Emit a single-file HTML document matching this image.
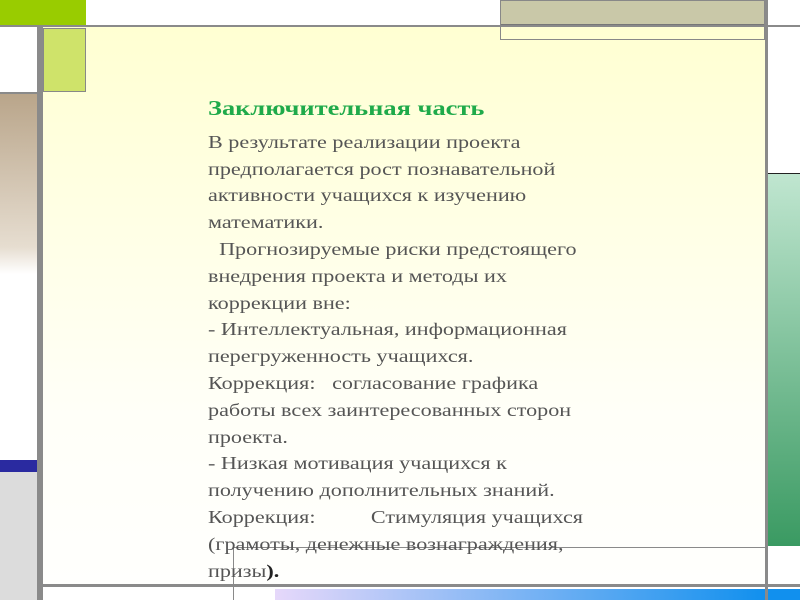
<!DOCTYPE html>
<html><head><meta charset="utf-8"><style>
*{margin:0;padding:0}
body{width:800px;height:600px;position:relative;overflow:hidden;background:#fff;font-family:"Liberation Serif",serif}
div{position:absolute}
.g{background:#8a8a8a}
</style></head><body>
<div style="left:43px;top:27px;width:722px;height:557px;background:linear-gradient(#ffffd2,#fffff8 70%,#fffffd)"></div>
<div style="left:0;top:0;width:86px;height:25px;background:#99cc00"></div>
<div class="g" style="left:0;top:25px;width:800px;height:2px"></div>
<div style="left:43px;top:28px;width:43px;height:64px;background:#cfe36a;border:1px solid #888;box-sizing:border-box"></div>
<div class="g" style="left:0;top:92px;width:37px;height:2px"></div>
<div style="left:0;top:94px;width:37px;height:180px;background:linear-gradient(#b9a58a,#e6ddd0 85%,#fff)"></div>
<div style="left:0;top:460px;width:37px;height:12px;background:#2a2aa0"></div>
<div style="left:0;top:472px;width:37px;height:128px;background:#dcdcdc"></div>
<div class="g" style="left:37px;top:25px;width:6px;height:575px"></div>
<div style="left:500px;top:0;width:265px;height:25px;background:#c9c8a8;border:1px solid #777;box-sizing:border-box"></div>
<div style="left:500px;top:0;width:265px;height:40px;border:1px solid #888;box-sizing:border-box"></div>
<div class="g" style="left:765px;top:0;width:3px;height:600px"></div>
<div style="left:768px;top:173px;width:32px;height:372px;background:linear-gradient(#c0e6d0,#3a9a62);border-top:1px solid #222"></div>
<div class="g" style="left:233px;top:547px;width:532px;height:1px"></div>
<div class="g" style="left:233px;top:547px;width:1px;height:53px"></div>
<div class="g" style="left:43px;top:584px;width:757px;height:3px"></div>
<div style="left:275px;top:589px;width:490px;height:11px;background:linear-gradient(90deg,#e6d8fa,#1190ee)"></div>
<div style="left:768px;top:589px;width:32px;height:11px;background:#1190ee"></div>
<div style="left:208px;top:95px;width:400px;font-size:18px;line-height:26.8px;color:#555;transform:scaleX(1.23);transform-origin:0 0;white-space:nowrap">
<div style="position:static;color:#1faa4a;font-weight:bold;font-size:21.5px;margin-bottom:7px">Заключительная часть</div>
В результате реализации проекта<br>предполагается рост познавательной<br>активности учащихся к изучению<br>математики.<br>&nbsp;&nbsp;Прогнозируемые риски предстоящего<br>внедрения проекта и методы их<br>коррекции вне:<br>- Интеллектуальная, информационная<br>перегруженность учащихся.<br>Коррекция:&nbsp;&nbsp; согласование графика<br>работы всех заинтересованных сторон<br>проекта.<br>- Низкая мотивация учащихся к<br>получению дополнительных знаний.<br>Коррекция:&nbsp;&nbsp;&nbsp;&nbsp;&nbsp;&nbsp;&nbsp;&nbsp;&nbsp; Стимуляция учащихся<br>(грамоты, денежные вознаграждения,<br>призы<b style="color:#222">).</b>
</div>
</body></html>
